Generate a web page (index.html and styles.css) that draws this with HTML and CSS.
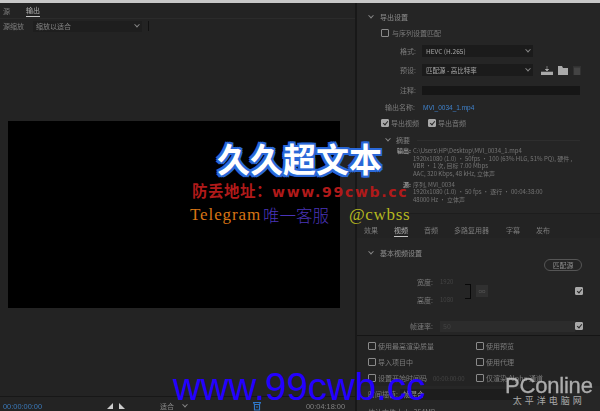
FILE: index.html
```html
<!DOCTYPE html>
<html>
<head>
  <meta charset="UTF-8">
  <link rel="stylesheet" href="styles.css">
</head>
<body>
  <div class="app">
    <div class="left">
      <div class="tabs">
        <span class="tab-src">源</span>
        <span class="tab-on">输出</span>
      </div>
      <div class="toolbar">
        <span>源缩放</span>
        <div class="scale">缩放以适合<i class="chev"></i></div>
        <b class="tick"></b>
      </div>
      <div class="preview">
        <div class="screen"></div>
      </div>
      <div class="transport">
        <span class="tc">00:00:00:00</span>
        <svg class="marks" width="24" height="8" viewBox="0 0 24 8">
          <polygon points="1,7 7,7 7,1" fill="#ccc"/>
          <polygon points="13,1 13,7 19,7" fill="#ccc"/>
        </svg>
        <div class="fit">适合<i class="chev"></i></div>
        <svg class="export" width="10" height="10" viewBox="0 0 10 10">
          <path d="M1 1.5h8M1.5 1.5l1 2h5l1-2M2.5 3.5v5.5h5V3.5M4 6h2" fill="none" stroke="#2f78c8" stroke-width="1.2"/>
        </svg>
        <span class="dur">00:04:18:00</span>
      </div>
    </div>

    <div class="right">
      <div class="settings">
        <div class="row head"><i class="chev"></i>导出设置</div>
        <div class="row match"><i class="cb"></i>与序列设置匹配</div>
        <div class="row field f-format">
          <label>格式:</label>
          <div class="sel">HEVC (H.265)<i class="chev"></i></div>
        </div>
        <div class="row field f-preset">
          <label>预设:</label>
          <div class="sel">匹配源 - 高比特率<i class="chev"></i></div>
          <svg class="tool" width="12" height="9" viewBox="0 0 12 9"><path d="M6 0v5M4 3l2 2 2-2M0 6h12v3H0z" fill="#aaa" stroke="#aaa" stroke-width=".6"/></svg>
          <svg class="tool" width="10" height="9" viewBox="0 0 10 9"><path d="M0 0h4l1 2h5v7H0z" fill="#aaa"/></svg>
          <svg class="tool" width="8" height="9" viewBox="0 0 8 9"><path d="M0 1h8M1 2h6v7H1z" fill="#444" stroke="#444" stroke-width=".8"/></svg>
        </div>
        <div class="row field f-note">
          <label>注释:</label>
          <div class="note"></div>
        </div>
        <div class="row name"><label>输出名称:</label><a>MVI_0034_1.mp4</a></div>
        <div class="row pair">
          <i class="cb on"></i><span class="w37">导出视频</span>
          <i class="cb on"></i><span>导出音频</span>
        </div>
        <div class="row summary-head"><i class="chev"></i>摘要<b class="rule"></b></div>
        <div class="summary">
          <div class="sum-block">
            <label>输出:</label>
            <p>C:\Users\HP\Desktop\MVI_0034_1.mp4<br>1920x1080 (1.0) • 50fps • 100 (63% HLG, 51% PQ), 硬件 ,<br>VBR • 1 次, 目标 7.00 Mbps<br>AAC, 320 Kbps, 48 kHz, 立体声</p>
          </div>
          <div class="sum-block src">
            <label>源:</label>
            <p>序列, MVI_0034<br>1920x1080 (1.0) • 50 fps • 逐行 • 00:04:38:00<br>48000 Hz • 立体声</p>
          </div>
        </div>
      </div>

      <div class="rtabs">
        <span>效果</span>
        <span class="tab-on">视频</span>
        <span>音频</span>
        <span>多路复用器</span>
        <span>字幕</span>
        <span>发布</span>
      </div>

      <div class="video">
        <div class="row head"><i class="chev"></i>基本视频设置</div>
        <div class="btn-row"><span class="pill">匹配源</span></div>
        <div class="dims">
          <div class="dim-col">
            <div class="dim"><label>宽度:</label><em>1920</em></div>
            <div class="dim"><label>高度:</label><em>1080</em></div>
          </div>
          <b class="bracket"></b>
          <span class="link">∞</span>
          <i class="cb on end"></i>
        </div>
        <div class="row rate">
          <label>帧速率:</label>
          <div class="rate-sel">50</div>
          <i class="cb on"></i>
        </div>
      </div>

      <div class="options">
        <div class="opt"><i class="cb"></i>使用最高渲染质量</div>
        <div class="opt"><i class="cb"></i>使用预览</div>
        <div class="opt"><i class="cb"></i>导入项目中</div>
        <div class="opt"><i class="cb"></i>使用代理</div>
        <div class="opt"><i class="cb"></i>设置开始时间码<em>00:00:00:00</em></div>
        <div class="opt"><i class="cb"></i>仅渲染 Alpha 通道</div>
      </div>
      <div class="row interp"><label>时间插值:</label><div class="interp-sel">帧混合</div></div>
      <div class="row size">估计文件大小: 354MB</div>
    </div>
  </div>

  <div class="wm wm-title">久久超文本</div>
  <div class="wm wm-addr"><span>防丢地址：</span>www.99cwb.cc</div>
  <div class="wm wm-tg">Telegram</div>
  <div class="wm wm-kf">唯一客服</div>
  <div class="wm wm-at">@cwbss</div>
  <div class="wm wm-url">www.99cwb.cc</div>
  <div class="wm wm-pc">
    <div class="pc-logo">PConline</div>
    <div class="pc-cn">太平洋电脑网</div>
  </div>
</body>
</html>
```

FILE: styles.css
```css
html, body {
  margin: 0;
  padding: 0;
  width: 600px;
  height: 411px;
  overflow: hidden;
  background: #232323;
  font-family: "Noto Sans CJK SC", "Noto Sans", sans-serif;
}
p {
  margin: 0;
}
i, em {
  font-style: normal;
}
.app {
  width: 600px;
  height: 408px;
  border-top: 3px solid #c8c8c8;
  display: grid;
  grid-template-columns: 355px 2px 1fr;
  font-size: 7px;
  color: #7c7c7c;
  filter: blur(.45px);
  background: #181818;
}
.left {
  grid-column: 1;
  display: flex;
  flex-direction: column;
  background: #232323;
  min-height: 0;
}
.right {
  grid-column: 3;
  background: #262626;
  overflow: hidden;
}

/* left panel */
.tabs {
  height: 15px;
  display: flex;
  align-items: center;
  gap: 16px;
  padding-left: 3px;
  border-bottom: 1px solid #2b2b2b;
}
.tab-on {
  color: #b0b0b0;
  line-height: 11px;
  border-bottom: 1px solid #c4c4c4;
}
.toolbar {
  height: 14px;
  display: flex;
  align-items: center;
  padding-left: 3px;
}
.scale {
  width: 106px;
  height: 11px;
  margin-left: 9px;
  padding-left: 3px;
  background: #1e1e1e;
  display: flex;
  align-items: center;
  justify-content: space-between;
  color: #848484;
}
.tick {
  width: 1px;
  height: 10px;
  margin-left: 6px;
  background: #111;
}
.chev {
  display: block;
  width: 3px;
  height: 3px;
  margin: 0 3px;
  border-right: 1px solid #888;
  border-bottom: 1px solid #888;
  transform: rotate(45deg) translate(-1px, -1px);
}
.preview {
  flex: 1;
  padding: 88px 15px 0 8px;
}
.screen {
  height: 187px;
  background: #000;
}
.transport {
  height: 15px;
  box-sizing: border-box;
  padding: 4px 0 0 3px;
  display: flex;
  align-items: center;
  border-top: 1px solid #171717;
  font-size: 6.5px;
}
.tc {
  width: 39px;
  color: #3a78b8;
  font-size: 7.4px;
  font-family: "Liberation Sans", sans-serif;
}
.marks {
  margin-left: 64px;
}
.fit {
  width: 30px;
  margin-left: 30px;
  display: flex;
  justify-content: space-between;
  align-items: center;
  color: #8a8a8a;
  font-size: 7px;
}
.export {
  margin-left: 62px;
}
.dur {
  margin-left: 44px;
  color: #808080;
  font-size: 7.4px;
  font-family: "Liberation Sans", sans-serif;
}

/* right panel */
.row {
  display: flex;
  align-items: center;
}
.settings {
  padding-top: 6px;
  height: 211px;
  box-sizing: border-box;
  border-bottom: 1px solid #1d1d1d;
  background: #252525;
}
.head {
  height: 16px;
  padding-left: 12px;
  gap: 5px;
  color: #8e8e8e;
}
.head .chev {
  margin: 0 2px 0 0;
}
.cb {
  display: block;
  flex: none;
  box-sizing: border-box;
  width: 8px;
  height: 8px;
  border: 1px solid #8a8a8a;
  border-radius: 1px;
}
.cb.on {
  background: #a8a8a8;
  border-color: #a8a8a8;
  position: relative;
}
.cb.on::after {
  content: "";
  position: absolute;
  left: 1.5px;
  top: 0;
  width: 2px;
  height: 4px;
  border-right: 1px solid #262626;
  border-bottom: 1px solid #262626;
  transform: rotate(40deg);
}
.match {
  height: 16px;
  padding-left: 24px;
  gap: 3px;
}
.field {
  padding-left: 43px;
}
.field label {
  width: 22px;
}
.f-format {
  height: 20px;
}
.f-preset {
  height: 18px;
}
.f-note {
  height: 22px;
}
.sel {
  width: 107px;
  height: 12px;
  padding-left: 4px;
  background: #1b1b1b;
  color: #a8a8a8;
  font-size: 6.5px;
  display: flex;
  align-items: center;
  justify-content: space-between;
}
.tool {
  margin-left: 5px;
}
.tool:first-of-type {
  margin-left: 8px;
}
.note {
  width: 158px;
  height: 9px;
  background: #161616;
}
.name {
  height: 12px;
  padding-left: 28px;
}
.name label {
  width: 38px;
}
.name a {
  color: #3f82cc;
  font-size: 6.5px;
  font-family: "Liberation Sans", sans-serif;
}
.pair {
  height: 20px;
  padding-left: 24px;
  gap: 2px;
}
.w37 {
  width: 35px;
}
.summary-head {
  height: 14px;
  padding-left: 29px;
  gap: 4px;
}
.summary-head .chev {
  margin: 0 2px 0 0;
}
.rule {
  flex: 1;
  height: 1px;
  margin: 0 20px 0 3px;
  background: #2e2e2e;
}
.summary {
  font-size: 6px;
  line-height: 7.5px;
  color: #767676;
  white-space: nowrap;
}
.sum-block {
  display: flex;
  padding-left: 39px;
}
.sum-block label {
  flex: none;
  width: 17px;
  color: #969696;
  text-align: right;
  font-weight: bold;
  padding-right: 2px;
  box-sizing: border-box;
}
.sum-block.src {
  margin-top: 3.5px;
}
.rtabs {
  height: 16px;
  padding: 8px 0 0 7px;
  box-sizing: content-box;
  display: flex;
  gap: 16px;
  align-items: center;
  background: #232323;
}
.rtabs span {
  line-height: 12px;
  width: 14px;
  white-space: nowrap;
}
.rtabs span:nth-child(4) {
  width: 36px;
}
.video {
  height: 98px;
  box-sizing: border-box;
  padding-top: 9px;
  background: #252525;
  border-bottom: 1px solid #151515;
}
.video .head {
  height: 12px;
}
.btn-row {
  display: flex;
  justify-content: flex-end;
  padding-right: 18px;
}
.pill {
  width: 38px;
  height: 12px;
  line-height: 11px;
  box-sizing: border-box;
  text-align: center;
  border: 1px solid #555;
  border-radius: 6px;
  color: #8c8c8c;
}
.dims {
  height: 30px;
  margin-top: 5px;
  padding-left: 60px;
  display: flex;
  align-items: center;
}
.dim-col {
  width: 48px;
  height: 30px;
  display: flex;
  flex-direction: column;
  justify-content: space-between;
}
.dim {
  display: flex;
  line-height: 12px;
}
.dim label {
  width: 23px;
}
.dim em, .opt em {
  color: #444;
  font-size: 6px;
}
.bracket {
  width: 6px;
  height: 15px;
  box-sizing: border-box;
  border: 1.5px solid #080808;
  border-left: 0;
}
.link {
  width: 12px;
  height: 12px;
  margin-left: 5px;
  background: #303030;
  color: #555;
  text-align: center;
  line-height: 12px;
}
.end {
  margin-left: 87px;
}
.rate {
  height: 14px;
  margin-top: 13px;
  padding-left: 53px;
}
.rate label {
  width: 30px;
}
.rate-sel {
  width: 135px;
  height: 11px;
  line-height: 11px;
  padding-left: 3px;
  box-sizing: border-box;
  background: #2c2c2c;
  color: #444;
}
.options {
  height: 48px;
  padding: 2px 0 0 11px;
  box-sizing: content-box;
  display: grid;
  grid-template-columns: 108px 1fr;
  grid-auto-rows: 16px;
  background: #232323;
}
.opt {
  display: flex;
  align-items: center;
  gap: 2px;
}
.opt em {
  margin-left: 4px;
}
.interp {
  height: 14px;
  margin-top: 1px;
  padding-left: 11px;
}
.interp label {
  width: 32px;
}
.interp-sel {
  width: 150px;
  height: 11px;
  line-height: 11px;
  padding-left: 3px;
  background: #1d1d1d;
  color: #999;
}
.size {
  height: 14px;
  margin-top: 4px;
  padding-left: 11px;
}

/* watermarks on top of the capture */
.wm {
  position: absolute;
  white-space: nowrap;
}
.wm-title {
  left: 217px;
  top: 134px;
  font-size: 33px;
  line-height: 48px;
  font-weight: bold;
  color: #fff;
  text-shadow: 2px 0 0 #2a68d8, -2px 0 0 #2a68d8, 0 2px 0 #2a68d8, 0 -2px 0 #2a68d8,
    2px 2px 0 #2a68d8, -2px 2px 0 #2a68d8, 2px -2px 0 #2a68d8, -2px -2px 0 #2a68d8;
}
.wm-addr {
  left: 192px;
  top: 180px;
  line-height: 20px;
  color: #b01a1a;
  font-family: "DejaVu Sans", sans-serif;
  font-weight: bold;
  font-size: 14px;
  letter-spacing: 1.7px;
}
.wm-addr span {
  font-family: "Noto Sans CJK SC", sans-serif;
  font-size: 15.5px;
  letter-spacing: .5px;
}
.wm-tg {
  left: 190px;
  top: 204px;
  font-family: "Liberation Serif", serif;
  font-size: 17px;
  line-height: 22px;
  letter-spacing: .9px;
  color: #d87414;
}
.wm-kf {
  left: 263px;
  top: 204px;
  font-size: 16.5px;
  line-height: 22px;
  font-weight: 300;
  color: #4a34b8;
}
.wm-at {
  left: 349px;
  top: 204px;
  font-family: "Liberation Serif", serif;
  font-size: 17px;
  line-height: 22px;
  letter-spacing: .7px;
  color: #b6b820;
}
.wm-url {
  left: 173px;
  top: 365px;
  font-family: "Liberation Sans", sans-serif;
  font-size: 38.5px;
  line-height: 44px;
  color: #2400ff;
}
.wm-pc {
  left: 505px;
  top: 375px;
  color: #c4c4c4;
  text-align: center;
}
.pc-logo {
  font-family: "Liberation Sans", sans-serif;
  font-size: 22px;
  line-height: 21px;
  letter-spacing: -.2px;
  opacity: .85;
  -webkit-text-stroke: .3px #c4c4c4;
}
.pc-cn {
  font-size: 9px;
  line-height: 10px;
  letter-spacing: 3px;
  color: #aaa;
}
```
